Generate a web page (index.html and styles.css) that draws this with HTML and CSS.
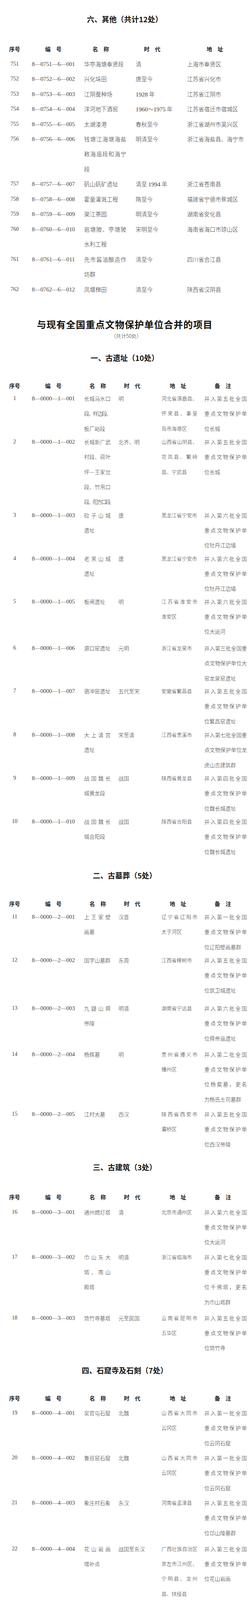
FILE: index.html
```html
<!DOCTYPE html>
<html lang="zh-CN">
<head>
<meta charset="utf-8">
<title>第八批全国重点文物保护单位名单</title>
<link rel="stylesheet" href="styles.css">
</head>
<body>
<div class="page">

<section class="sec s-other">
  <h2 class="sec-title">六、其他（共计12处）</h2>
  <div class="tbl tbl-a">
    <div class="row thead"><div class="c seq">序号</div><div class="c code">编　号</div><div class="c name">名　称</div><div class="c era">时　代</div><div class="c addr">地　址</div></div>
    <div class="row"><div class="c seq">751</div><div class="c code">8—0751—6—001</div><div class="c name">华亭海塘奉贤段</div><div class="c era">清</div><div class="c addr">上海市奉贤区</div></div>
    <div class="row"><div class="c seq">752</div><div class="c code">8—0752—6—002</div><div class="c name">兴化垛田</div><div class="c era">唐至今</div><div class="c addr">江苏省兴化市</div></div>
    <div class="row"><div class="c seq">753</div><div class="c code">8—0753—6—003</div><div class="c name">江阴蚕种场</div><div class="c era"><span class="num">1928</span> 年</div><div class="c addr">江苏省江阴市</div></div>
    <div class="row"><div class="c seq">754</div><div class="c code">8—0754—6—004</div><div class="c name">洋河地下酒窖</div><div class="c era"><span class="num">1960</span>～<span class="num">1975</span> 年</div><div class="c addr">江苏省宿迁市宿城区</div></div>
    <div class="row"><div class="c seq">755</div><div class="c code">8—0755—6—005</div><div class="c name">太湖溇港</div><div class="c era">春秋至今</div><div class="c addr">浙江省湖州市吴兴区</div></div>
    <div class="row"><div class="c seq">756</div><div class="c code">8—0756—6—006</div><div class="c name"><span class="ln">钱塘江海塘海盐</span><span class="ln">敕海庙段和海宁</span>段</div><div class="c era">明清至今</div><div class="c addr">浙江省海盐县、海宁市</div></div>
    <div class="row"><div class="c seq">757</div><div class="c code">8—0757—6—007</div><div class="c name">矾山矾矿遗址</div><div class="c era">清至 <span class="num">1994</span> 年</div><div class="c addr">浙江省苍南县</div></div>
    <div class="row"><div class="c seq">758</div><div class="c code">8—0758—6—008</div><div class="c name">霍童灌溉工程</div><div class="c era">隋至今</div><div class="c addr">福建省宁德市蕉城区</div></div>
    <div class="row"><div class="c seq">759</div><div class="c code">8—0759—6—009</div><div class="c name">渠江茶园</div><div class="c era">明清至今</div><div class="c addr">湖南省安化县</div></div>
    <div class="row"><div class="c seq">760</div><div class="c code">8—0760—6—010</div><div class="c name"><span class="ln">岩塘陂、亭塘陂</span>水利工程</div><div class="c era">宋明至今</div><div class="c addr">海南省海口市琼山区</div></div>
    <div class="row"><div class="c seq">761</div><div class="c code">8—0761—6—011</div><div class="c name"><span class="ln">先市酱油酿造作</span>坊群</div><div class="c era">清至今</div><div class="c addr">四川省合江县</div></div>
    <div class="row"><div class="c seq">762</div><div class="c code">8—0762—6—012</div><div class="c name">凤堰梯田</div><div class="c era">清至今</div><div class="c addr">陕西省汉阴县</div></div>
  </div>
</section>

<header class="merge-head">
  <h1 class="main-title">与现有全国重点文物保护单位合并的项目</h1>
  <p class="sub-title">（共计50处）</p>
</header>

<section class="sec s-site">
  <h2 class="sec-title">一、古遗址（10处）</h2>
  <div class="tbl tbl-b">
    <div class="row thead"><div class="c seq">序号</div><div class="c code">编　号</div><div class="c name">名　称</div><div class="c era">时　代</div><div class="c addr">地　址</div><div class="c note">备　注</div></div>
    <div class="row ga"><div class="c seq">1</div><div class="c code">8—0000—1—001</div><div class="c name"><span class="ln">长城马水口</span><span class="ln k2">段、样边段、</span>板厂峪段</div><div class="c era">明</div><div class="c addr"><span class="ln">河北省涿鹿县、</span><span class="ln">怀来县、秦皇</span>岛市海港区</div><div class="c note"><span class="ln">并入第五批全国</span><span class="ln">重点文物保护单</span>位长城</div></div>
    <div class="row"><div class="c seq">2</div><div class="c code">8—0000—1—002</div><div class="c name"><span class="ln">长城新广武</span><span class="ln">村段、荷叶</span><span class="ln">坪—王家岔</span><span class="ln">段、竹帛口</span><span class="k2">段、阳方口段</span></div><div class="c era">北齐、明</div><div class="c addr"><span class="ln">山西省山阴县、</span><span class="ln">岢岚县、繁峙</span>县、宁武县</div><div class="c note"><span class="ln">并入第五批全国</span><span class="ln">重点文物保护单</span>位长城</div></div>
    <div class="row"><div class="c seq">3</div><div class="c code">8—0000—1—003</div><div class="c name"><span class="ln">砬子山城</span>遗址</div><div class="c era">唐</div><div class="c addr">黑龙江省宁安市</div><div class="c note"><span class="ln">并入第六批全国</span><span class="ln">重点文物保护单</span>位牡丹江边墙</div></div>
    <div class="row"><div class="c seq">4</div><div class="c code">8—0000—1—004</div><div class="c name"><span class="ln">老黑山城</span>遗址</div><div class="c era">唐</div><div class="c addr">黑龙江省宁安市</div><div class="c note"><span class="ln">并入第六批全国</span><span class="ln">重点文物保护单</span>位牡丹江边墙</div></div>
    <div class="row ga"><div class="c seq">5</div><div class="c code">8—0000—1—005</div><div class="c name">板闸遗址</div><div class="c era">明</div><div class="c addr"><span class="ln">江苏省淮安市</span>淮安区</div><div class="c note"><span class="ln">并入第六批全国</span><span class="ln">重点文物保护单</span>位大运河</div></div>
    <div class="row gf"><div class="c seq">6</div><div class="c code">8—0000—1—006</div><div class="c name">源口窑遗址</div><div class="c era">元明</div><div class="c addr">浙江省龙泉市</div><div class="c note"><span class="ln">并入第三批全国重</span><span class="ln">点文物保护单位大</span>窑龙泉窑遗址</div></div>
    <div class="row ga"><div class="c seq">7</div><div class="c code">8—0000—1—007</div><div class="c name">骆冲窑遗址</div><div class="c era">五代至宋</div><div class="c addr">安徽省繁昌县</div><div class="c note"><span class="ln">并入第五批全国</span><span class="ln">重点文物保护单</span>位繁昌窑遗址</div></div>
    <div class="row gc"><div class="c seq">8</div><div class="c code">8—0000—1—008</div><div class="c name"><span class="ln">大上清宫</span>遗址</div><div class="c era">宋至清</div><div class="c addr">江西省贵溪市</div><div class="c note"><span class="ln">并入第七批全国重</span><span class="ln">点文物保护单位龙</span>虎山古建筑群</div></div>
    <div class="row"><div class="c seq">9</div><div class="c code">8—0000—1—009</div><div class="c name"><span class="ln">战国魏长</span>城黄龙段</div><div class="c era">战国</div><div class="c addr">陕西省黄龙县</div><div class="c note"><span class="ln">并入第四批全国</span><span class="ln">重点文物保护单</span>位魏长城遗址</div></div>
    <div class="row"><div class="c seq">10</div><div class="c code">8—0000—1—010</div><div class="c name"><span class="ln">战国魏长</span>城合阳段</div><div class="c era">战国</div><div class="c addr">陕西省合阳县</div><div class="c note"><span class="ln">并入第四批全国</span><span class="ln">重点文物保护单</span>位魏长城遗址</div></div>
  </div>
</section>

<section class="sec s-tomb">
  <h2 class="sec-title">二、古墓葬（5处）</h2>
  <div class="tbl tbl-b">
    <div class="row thead"><div class="c seq">序号</div><div class="c code">编　号</div><div class="c name">名　称</div><div class="c era">时　代</div><div class="c addr">地　址</div><div class="c note">备　注</div></div>
    <div class="row"><div class="c seq">11</div><div class="c code">8—0000—2—001</div><div class="c name"><span class="ln">上王家壁</span>画墓</div><div class="c era">汉晋</div><div class="c addr"><span class="ln">辽宁省辽阳市</span>太子河区</div><div class="c note"><span class="ln">并入第一批全国</span><span class="ln">重点文物保护单</span>位辽阳壁画墓群</div></div>
    <div class="row"><div class="c seq">12</div><div class="c code">8—0000—2—002</div><div class="c name">国字山墓群</div><div class="c era">东周</div><div class="c addr">江西省樟树市</div><div class="c note"><span class="ln">并入第五批全国</span><span class="ln">重点文物保护单</span>位筑卫城遗址</div></div>
    <div class="row gg"><div class="c seq">13</div><div class="c code">8—0000—2—003</div><div class="c name"><span class="ln">九嶷山舜</span>帝陵</div><div class="c era">明清</div><div class="c addr">湖南省宁远县</div><div class="c note"><span class="ln">并入第六批全国</span><span class="ln">重点文物保护单</span>位舜帝庙遗址</div></div>
    <div class="row ge"><div class="c seq">14</div><div class="c code">8—0000—2—004</div><div class="c name">杨辉墓</div><div class="c era">明</div><div class="c addr"><span class="ln">贵州省遵义市</span>播州区</div><div class="c note"><span class="ln">并入第二批全国</span><span class="ln">重点文物保护单</span><span class="ln">位杨粲墓，更名</span>为杨氏土司墓群</div></div>
    <div class="row gd"><div class="c seq">15</div><div class="c code">8—0000—2—005</div><div class="c name">江村大墓</div><div class="c era">西汉</div><div class="c addr"><span class="ln">陕西省西安市</span>灞桥区</div><div class="c note"><span class="ln">并入第五批全国</span><span class="ln">重点文物保护单</span>位西汉帝陵</div></div>
  </div>
</section>

<section class="sec s-arch">
  <h2 class="sec-title">三、古建筑（3处）</h2>
  <div class="tbl tbl-b">
    <div class="row thead"><div class="c seq">序号</div><div class="c code">编　号</div><div class="c name">名　称</div><div class="c era">时　代</div><div class="c addr">地　址</div><div class="c note">备　注</div></div>
    <div class="row gd"><div class="c seq">16</div><div class="c code">8—0000—3—001</div><div class="c name">通州燃灯塔</div><div class="c era">清</div><div class="c addr">北京市通州区</div><div class="c note"><span class="ln">并入第六批全国</span><span class="ln">重点文物保护单</span>位大运河</div></div>
    <div class="row gd"><div class="c seq">17</div><div class="c code">8—0000—3—002</div><div class="c name"><span class="ln">巾山东大</span><span class="ln">塔、南山</span>殿塔</div><div class="c era">明清</div><div class="c addr">浙江省临海市</div><div class="c note"><span class="ln">并入第七批全国</span><span class="ln">重点文物保护单</span><span class="ln">位千佛塔，更名</span>为巾山塔群</div></div>
    <div class="row ge"><div class="c seq">18</div><div class="c code">8—0000—3—003</div><div class="c name">筇竹寺墓塔</div><div class="c era">元至民国</div><div class="c addr"><span class="ln">云南省昆明市</span>五华区</div><div class="c note"><span class="ln">并入第五批全国</span><span class="ln">重点文物保护单</span>位筇竹寺</div></div>
  </div>
</section>

<section class="sec s-cave">
  <h2 class="sec-title">四、石窟寺及石刻（7处）</h2>
  <div class="tbl tbl-b">
    <div class="row thead"><div class="c seq">序号</div><div class="c code">编　号</div><div class="c name">名　称</div><div class="c era">时　代</div><div class="c addr">地　址</div><div class="c note">备　注</div></div>
    <div class="row gd"><div class="c seq">19</div><div class="c code">8—0000—4—001</div><div class="c name">吴官屯石窟</div><div class="c era">北魏</div><div class="c addr"><span class="ln">山西省大同市</span>云冈区</div><div class="c note"><span class="ln">并入第一批全国</span><span class="ln">重点文物保护单</span>位云冈石窟</div></div>
    <div class="row gd"><div class="c seq">20</div><div class="c code">8—0000—4—002</div><div class="c name">鲁班窑石窟</div><div class="c era">北魏</div><div class="c addr"><span class="ln">山西省大同市</span>云冈区</div><div class="c note"><span class="ln">并入第一批全国</span><span class="ln">重点文物保护单</span>位云冈石窟</div></div>
    <div class="row gd"><div class="c seq">21</div><div class="c code">8—0000—4—003</div><div class="c name">象庄村石象</div><div class="c era">东汉</div><div class="c addr">河南省孟津县</div><div class="c note"><span class="ln">并入第五批全国</span><span class="ln">重点文物保护单</span>位邙山陵墓群</div></div>
    <div class="row ge"><div class="c seq">22</div><div class="c code">8—0000—4—004</div><div class="c name"><span class="ln">花山岩画</span>增补点</div><div class="c era">战国至东汉</div><div class="c addr"><span class="ln">广西壮族自治区</span><span class="ln">崇左市江州区、</span><span class="ln">宁明县、龙州</span>县、扶绥县</div><div class="c note"><span class="ln">并入第三批全国</span><span class="ln">重点文物保护单</span>位花山岩画</div></div>
    <div class="row gd"><div class="c seq">23</div><div class="c code">8—0000—4—005</div><div class="c name"><span class="ln">妙高山摩</span>崖造像</div><div class="c era">南宋</div><div class="c addr">重庆市大足区</div><div class="c note"><span class="ln">并入第一批全国</span><span class="ln">重点文物保护单</span>位北山摩崖造像</div></div>
    <div class="row gd"><div class="c seq">24</div><div class="c code">8—0000—4—006</div><div class="c name"><span class="ln">舒成岩摩</span>崖造像</div><div class="c era">南宋</div><div class="c addr">重庆市大足区</div><div class="c note"><span class="ln">并入第一批全国</span><span class="ln">重点文物保护单</span>位北山摩崖造像</div></div>
    <div class="row gf"><div class="c seq">25</div><div class="c code">8—0000—4—007</div><div class="c name"><span class="ln">西狭古栈</span><span class="ln">道遗址及</span>题刻</div><div class="c era">东汉</div><div class="c addr">甘肃省成县</div><div class="c note"><span class="ln">并入第五批全国重</span><span class="ln">点文物保护单位西</span><span class="ln">狭颂摩崖石刻，更</span><span class="ln">名为西狭古栈道及</span>摩崖石刻</div></div>
  </div>
</section>

<section class="sec s-modern">
  <h2 class="sec-title">五、近现代重要史迹及代表性建筑（25处）</h2>
  <div class="tbl tbl-b">
    <div class="row thead"><div class="c seq">序号</div><div class="c code">编　号</div><div class="c name">名　称</div><div class="c era">时　代</div><div class="c addr">地　址</div><div class="c note">备　注</div></div>
    <div class="row ga"><div class="c seq">26</div><div class="c code">8—0000—5—001</div><div class="c name"><span class="ln">圣米厄尔</span>教堂</div><div class="c era"><span class="num">1904</span> 年</div><div class="c addr">北京市东城区</div><div class="c note"><span class="ln">并入第五批全国</span><span class="ln">重点文物保护单</span><span class="ln">位东交民巷使馆</span>建筑群</div></div>
    <div class="row ga"><div class="c seq">27</div><div class="c code">8—0000—5—002</div><div class="c name"><span class="ln">满铁农事试</span><span class="ln">验场熊岳城</span>分场旧址</div><div class="c era"><span class="num">1909</span>～<span class="num">1945</span> 年</div><div class="c addr"><span class="ln">辽宁省营口市</span>鲅鱼圈区</div><div class="c note"><span class="ln">并入第六批全国重</span><span class="ln">点文物保护单位中</span>东铁路建筑群</div></div>
    <div class="row ga"><div class="c seq">28</div><div class="c code">8—0000—5—003</div><div class="c name"><span class="ln">中东铁路</span><span class="ln">建筑群增</span>补点</div><div class="c era"><span class="num">1903</span> 年</div><div class="c addr"><span class="ln">吉林省长春市</span><span class="ln">德惠市、宽城</span>区</div><div class="c note"><span class="ln">并入第六批全国重</span><span class="ln">点文物保护单位中</span>东铁路建筑群</div></div>
    <div class="row"><div class="c seq">29</div><div class="c code">8—0000—5—004</div><div class="c name"><span class="ln">横道河子</span><span class="ln">机务公寓</span>旧址</div><div class="c era"><span class="num">1900</span>～<span class="num">1935</span> 年</div><div class="c addr">黑龙江省海林市</div><div class="c note"><span class="ln">并入第六批全国重</span><span class="ln">点文物保护单位中</span>东铁路建筑群</div></div>
    <div class="row ga"><div class="c seq">30</div><div class="c code">8—0000—5—005</div><div class="c name"><span class="ln">富拉尔基火</span>车站旧址</div><div class="c era"><span class="num">1903</span> 年</div><div class="c addr"><span class="ln">黑龙江省齐齐</span><span class="ln">哈尔市富拉尔</span>基区</div><div class="c note"><span class="ln">并入第六批全国重</span><span class="ln">点文物保护单位中</span>东铁路建筑群</div></div>
    <div class="row gf"><div class="c seq">31</div><div class="c code">8—0000—5—006</div><div class="c name"><span class="ln">勃利西山</span>仓库遗址</div><div class="c era"><span class="num">1934</span> 年</div><div class="c addr"><span class="ln">黑龙江省勃利</span>县</div><div class="c note"><span class="ln">并入第六批全国重</span><span class="ln">点文物保护单位侵</span>华日军东北要塞</div></div>
    <div class="row"><div class="c seq">32</div><div class="c code">8—0000—5—007</div><div class="c name"><span class="ln">中国共产党</span><span class="ln">第一次全国</span><span class="ln">代表大会宿</span>舍旧址</div><div class="c era"><span class="num">1921</span> 年</div><div class="c addr">上海市黄浦区</div><div class="c note"><span class="ln">并入第一批全国重</span><span class="ln">点文物保护单位中</span><span class="ln">国共产党第一次全</span>国代表大会会址</div></div>
    <div class="row"><div class="c seq">33</div><div class="c code">8—0000—5—008</div><div class="c name"><span class="ln">中山陵附属</span><span class="ln">革命历史图</span>书馆旧址</div><div class="c era"><span class="num">1935</span> 年</div><div class="c addr"><span class="ln">江苏省南京市</span>玄武区</div><div class="c note"><span class="ln">并入第一批全国</span><span class="ln">重点文物保护单</span>位中山陵</div></div>
    <div class="row gc"><div class="c seq">34</div><div class="c code">8—0000—5—009</div><div class="c name"><span class="ln">九龙岗老火</span>车站碉堡</div><div class="c era"><span class="num">1938</span>～<span class="num">1945</span> 年</div><div class="c addr"><span class="ln">安徽省淮南市</span>大通区</div><div class="c note"><span class="ln">并入第七批全国</span><span class="ln">重点文物保护单</span><span class="ln">位侵华日军淮南</span>罪证遗址</div></div>
    <div class="row gc"><div class="c seq">35</div><div class="c code">8—0000—5—010</div><div class="c name"><span class="ln">鼓浪屿近</span><span class="ln">代建筑群</span>增补点</div><div class="c era">清至民国</div><div class="c addr"><span class="ln">福建省厦门市</span>思明区</div><div class="c note"><span class="ln">并入第六批全国</span><span class="ln">重点文物保护单</span><span class="ln">位鼓浪屿近代建</span>筑群</div></div>
    <div class="row gc"><div class="c seq">36</div><div class="c code">8—0000—5—011</div><div class="c name"><span class="ln">中共闽浙</span><span class="ln">赣省机关</span>旧址</div><div class="c era"><span class="num">1926</span>～<span class="num">1934</span> 年</div><div class="c addr">江西省横峰县</div><div class="c note"><span class="ln">并入第四批全国重</span><span class="ln">点文物保护单位闽</span>浙赣省委机关旧址</div></div>
    <div class="row"><div class="c seq">37</div><div class="c code">8—0000—5—012</div><div class="c name"><span class="ln">德国海军</span><span class="ln">军官俱乐</span>部旧址</div><div class="c era"><span class="num">1909</span> 年</div><div class="c addr"><span class="ln">山东省青岛市</span>市南区</div><div class="c note"><span class="ln">并入第四批全国</span><span class="ln">重点文物保护单</span>位青岛德国建筑</div></div>
    <div class="row gd"><div class="c seq">38</div><div class="c code">8—0000—5—013</div><div class="c name"><span class="ln">汉口新泰</span>大楼旧址</div><div class="c era"><span class="num">1924</span> 年</div><div class="c addr"><span class="ln">湖北省武汉市</span>江岸区</div><div class="c note"><span class="ln">并入第六批全国重</span><span class="ln">点文物保护单位汉</span>口近代建筑群</div></div>
    <div class="row gc"><div class="c seq">39</div><div class="c code">8—0000—5—014</div><div class="c name"><span class="ln">汉口华俄</span><span class="ln">道胜银行</span>旧址</div><div class="c era"><span class="num">1896</span> 年</div><div class="c addr"><span class="ln">湖北省武汉市</span>江岸区</div><div class="c note"><span class="ln">并入第六批全国重</span><span class="ln">点文物保护单位汉</span>口近代建筑群</div></div>
    <div class="row gc"><div class="c seq">40</div><div class="c code">8—0000—5—015</div><div class="c name"><span class="ln">汉口英商</span><span class="ln">电灯公司</span>旧址</div><div class="c era"><span class="num">1905</span> 年</div><div class="c addr"><span class="ln">湖北省武汉市</span>江岸区</div><div class="c note"><span class="ln">并入第六批全国重</span><span class="ln">点文物保护单位汉</span>口近代建筑群</div></div>
    <div class="row gc"><div class="c seq">41</div><div class="c code">8—0000—5—016</div><div class="c name"><span class="ln">汉口花旗</span><span class="ln">银行大楼</span>旧址</div><div class="c era"><span class="num">1921</span> 年</div><div class="c addr"><span class="ln">湖北省武汉市</span>江岸区</div><div class="c note"><span class="ln">并入第六批全国重</span><span class="ln">点文物保护单位汉</span>口近代建筑群</div></div>
    <div class="row gc"><div class="c seq">42</div><div class="c code">8—0000—5—017</div><div class="c name"><span class="ln">汉口景明</span>大楼旧址</div><div class="c era"><span class="num">1921</span> 年</div><div class="c addr"><span class="ln">湖北省武汉市</span>江岸区</div><div class="c note"><span class="ln">并入第六批全国重</span><span class="ln">点文物保护单位汉</span>口近代建筑群</div></div>
    <div class="row gc"><div class="c seq">43</div><div class="c code">8—0000—5—018</div><div class="c name"><span class="ln">罗荣桓故</span>居增补点</div><div class="c era"><span class="num">1902</span> 年</div><div class="c addr">湖南省衡东县</div><div class="c note"><span class="ln">并入第七批全国</span><span class="ln">重点文物保护单</span>位罗荣桓故居</div></div>
    <div class="row gc"><div class="c seq">44</div><div class="c code">8—0000—5—019</div><div class="c name"><span class="ln">秋收起义文</span><span class="ln">家市会师旧</span>址增补点</div><div class="c era"><span class="num">1927</span> 年</div><div class="c addr">湖南省浏阳市</div><div class="c note"><span class="ln">并入第一批全国重</span><span class="ln k1">点文物保护单位秋收</span><span class="k1">起义文家市会师旧址</span></div></div>
    <div class="row gc"><div class="c seq">45</div><div class="c code">8—0000—5—020</div><div class="c name"><span class="ln">湘鄂赣革命</span><span class="ln">根据地旧址</span>增补点</div><div class="c era"><span class="num">1929</span>～<span class="num">1937</span> 年</div><div class="c addr">湖南省平江县</div><div class="c note"><span class="ln k1">并入第六批全国重点</span><span class="ln k1">文物保护单位湘鄂赣</span>革命根据地旧址</div></div>
    <div class="row ge"><div class="c seq">46</div><div class="c code">8—0000—5—021</div><div class="c name"><span class="ln">湘鄂川黔</span><span class="ln">革命根据</span><span class="ln">地旧址增</span>补点</div><div class="c era"><span class="num">1934</span>～<span class="num">1935</span> 年</div><div class="c addr"><span class="ln">湖南省永顺</span>县、津市市</div><div class="c note"><span class="ln">并入第六批全国</span><span class="ln">重点文物保护单</span><span class="ln">位湘鄂川黔革命</span>根据地旧址</div></div>
    <div class="row ge"><div class="c seq">47</div><div class="c code">8—0000—5—022</div><div class="c name"><span class="ln">黄埔军校</span><span class="ln">第二分校</span><span class="ln">十四军官</span>总队旧址</div><div class="c era"><span class="num">1938</span>～<span class="num">1945</span> 年</div><div class="c addr">湖南省洞口县</div><div class="c note"><span class="ln">并入第七批全国</span><span class="ln">重点文物保护单</span><span class="ln">位黄埔军校第二</span>分校旧址</div></div>
    <div class="row ge"><div class="c seq">48</div><div class="c code">8—0000—5—023</div><div class="c name"><span class="ln">赤山约农</span>会旧址</div><div class="c era"><span class="num">1922</span> 年</div><div class="c addr">广东省海丰县</div><div class="c note"><span class="ln">并入第一批全国重</span><span class="ln">点文物保护单位海</span>丰红宫、红场旧址</div></div>
    <div class="row ge"><div class="c seq">49</div><div class="c code">8—0000—5—024</div><div class="c name"><span class="ln">黄埔军校</span><span class="ln">燕塘分校</span>旧址</div><div class="c era"><span class="num">1925</span>～<span class="num">1929</span> 年</div><div class="c addr"><span class="ln">广东省广州市</span>天河区</div><div class="c note"><span class="ln">并入第三批全国</span><span class="ln">重点文物保护单</span>位黄埔军校旧址</div></div>
    <div class="row ge"><div class="c seq">50</div><div class="c code">8—0000—5—025</div><div class="c name"><span class="ln">湘江战役旧</span>址增补点</div><div class="c era"><span class="num">1934</span> 年</div><div class="c addr"><span class="ln k2">广西壮族自治区全</span><span class="ln k2">州县、龙胜各族自</span><span class="k2">治县、资源县</span></div><div class="c note"><span class="ln">并入第六批全国</span><span class="ln">重点文物保护单</span>位湘江战役旧址</div></div>
  </div>
</section>

</div>
</body>
</html>
```

FILE: styles.css
```css
html, body {
  margin: 0;
  padding: 0;
  background: #ffffff;
}

body {
  overflow-x: hidden;
}

.page {
  padding: 34.3px 0 17px;
  font-family: "Noto Sans CJK SC", sans-serif;
  color: #3a3a3a;
}

/* ---------- titles ---------- */
.sec-title {
  margin: 0;
  padding-right: 4px;
  text-align: center;
  font-family: "Noto Sans CJK SC", sans-serif;
  font-weight: 700;
  font-size: 19px;
  line-height: 30px;
  color: #151515;
}

.merge-head {
  text-align: center;
}

.main-title {
  margin: 52.64px 0 0;
  padding-right: 4px;
  font-family: "Noto Sans CJK SC", sans-serif;
  font-weight: 700;
  font-size: 24px;
  line-height: 34px;
  letter-spacing: 1px;
  color: #111111;
}

.sub-title {
  margin: 3px 0 0;
  padding-left: 4px;
  font-family: "Noto Sans CJK SC", sans-serif;
  font-weight: 300;
  font-size: 13px;
  line-height: 20px;
  color: #333333;
}

/* ---------- tables ---------- */
.tbl .row {
  display: grid;
}

.tbl-a .row {
  grid-template-columns: 75px 140px 132px 131.6px 1fr;
  font-size: 14.5px;
  line-height: 38.48px;
}

.tbl-b .row {
  grid-template-columns: 75px 140px 88px 110px 109.6px 1fr;
  font-size: 13.5px;
  line-height: 38.35px;
  margin-top: -4px;
}

.c {
  white-space: nowrap;
  min-width: 0;
  font-family: "Noto Sans CJK SC", sans-serif;
  font-weight: 300;
}

/* Latin-only cells use the Times-metric serif */
.seq,
.code {
  font-family: "Liberation Serif", serif;
  font-weight: 400;
}

.seq {
  text-align: center;
  font-size: 14px;
}

.code {
  text-align: center;
  padding-right: 17px;
  font-size: 14.7px;
}

/* years inside CJK cells: serif digits that do not stretch the line box */
.num {
  font-family: "Liberation Serif", serif;
  font-weight: 400;
  font-size: 1.07em;
  line-height: 0;
}

.tbl-a .name {
  padding-right: 24px;
}

.tbl-b .name {
  padding-right: 20px;
}

.tbl-b .addr {
  padding-right: 17.6px;
  font-size: 13px;
}

.tbl-b .note {
  padding-right: 10.4px;
}

/* a line justified to the full column width */
.ln {
  display: block;
  text-align: justify;
  text-align-last: justify;
}

.k1 {
  letter-spacing: -1.5px;
}

.k2 {
  letter-spacing: -2.5px;
}

/* header rows */
.thead .c {
  font-family: "Noto Sans CJK SC", sans-serif;
  font-weight: 700;
  font-size: 14px;
  color: #1e1e1e;
}

.tbl-a .thead .name { padding-left: 21.8px; }
.tbl-a .thead .era { padding-left: 21.3px; }
.tbl-a .thead .addr { padding-left: 49.9px; }

.tbl-b .thead .name { padding-left: 14px; }
.tbl-b .thead .era { padding-left: 14px; }
.tbl-b .thead .addr { padding-left: 21px; }
.tbl-b .thead .note { padding-left: 26.5px; }

/* spacing between table rows (the source document is uneven) */
.tbl-b .row.ga { margin-top: -5px; }
.tbl-b .row.gc { margin-top: -3px; }
.tbl-b .row.gd { margin-top: 0; }
.tbl-b .row.ge { margin-top: 2.5px; }
.tbl-b .row.gf { margin-top: 4px; }
.tbl-b .row.gg { margin-top: 8px; }

/* ---------- per-section spacing ---------- */
.s-other .thead { margin-top: 41.8px; }

.s-site .sec-title { margin-top: 31.3px; }
.s-site .thead { margin-top: 36.4px; }

.s-tomb .sec-title { margin-top: 26.9px; }
.s-tomb .thead { margin-top: 37.7px; }

.s-arch .sec-title { margin-top: 24.9px; }
.s-arch .thead { margin-top: 42.6px; }

.s-cave .sec-title { margin-top: 23.5px; }
.s-cave .thead { margin-top: 36.5px; }

.s-modern .sec-title { margin-top: 26.1px; }
.s-modern .thead { margin-top: 34.4px; }
```
